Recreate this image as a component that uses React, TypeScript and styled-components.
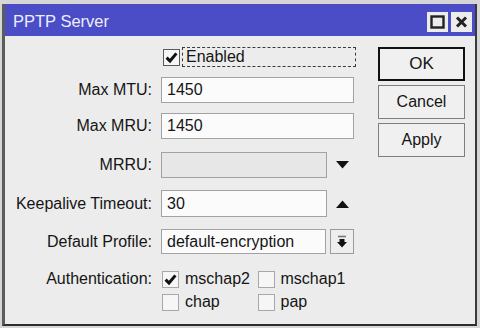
import React from "react";
import styled, { createGlobalStyle } from "styled-components";

const GlobalStyle = createGlobalStyle`
  html, body {
    margin: 0;
    padding: 0;
    background: #d6d6d6;
  }
  body {
    font-family: "Liberation Sans", Arial, sans-serif;
    font-size: 16px;
    color: #151515;
  }
`;

const Frame = styled.div`
  box-sizing: border-box;
  display: flex;
  height: 328px;
  padding: 4px 3px 2px 2px;
  width: 480px;
`;

const Window = styled.div`
  border-bottom: 2px solid #2e2e2e;
  border-left: 3px solid #5c5c5c;
  border-right: 2px solid #3a3a3a;
  display: flex;
  flex: 1;
  flex-direction: column;
`;

const TitleBar = styled.div`
  align-items: center;
  background-color: #4a4dc5;
  display: flex;
  height: 32px;
  justify-content: space-between;
  padding: 0 3px 0 8px;
`;

const Title = styled.span`
  color: #eeeefc;
  font-size: 16.5px;
  margin-top: 2px;
`;

const TitleButtons = styled.div`
  align-self: flex-end;
  display: flex;
  gap: 3px;
  margin-bottom: 4px;
`;

const TitleButton = styled.div`
  align-items: center;
  background-color: #ececec;
  display: flex;
  height: 20px;
  justify-content: center;
  width: 21px;
`;

const Client = styled.div`
  background-color: #ececec;
  display: flex;
  flex: 1;
  padding-top: 11px;
`;

const Form = styled.div`
  display: flex;
  flex-direction: column;
`;

const Row = styled.div<{ $h: number; $mt: number }>`
  align-items: center;
  column-gap: 9px;
  display: grid;
  grid-template-columns: 147px 193px;
  height: ${p => p.$h}px;
  margin-top: ${p => p.$mt}px;
`;

const Label = styled.span`
  text-align: right;
  white-space: nowrap;
`;

const Control = styled.div`
  align-items: center;
  display: flex;
  height: 100%;
`;

const Field = styled.div<{ $w?: number; $disabled?: boolean }>`
  align-items: center;
  background-color: ${p => (p.$disabled ? "#e7e7e7" : "#fbfbfb")};
  border: 1px solid #a2a2a2;
  box-sizing: border-box;
  display: flex;
  height: 100%;
  padding-left: 5px;
  width: ${p => (p.$w ? `${p.$w}px` : "100%")};
`;

const Box = styled.span<{ $ml?: number; $dark?: boolean }>`
  align-items: center;
  background-color: #f6f6f6;
  border: 1px solid ${p => (p.$dark ? "#5a5a5a" : "#a8a8a8")};
  box-sizing: border-box;
  display: inline-flex;
  flex-shrink: 0;
  height: 17px;
  justify-content: center;
  margin-left: ${p => p.$ml ?? 0}px;
  width: 17px;
`;

const FocusLabel = styled.span`
  align-items: center;
  border: 1px dashed #3a3a3a;
  box-sizing: border-box;
  display: flex;
  flex: 1;
  height: 20px;
  margin-left: 2px;
  margin-right: -2px;
  padding-left: 3px;
`;

const Spinner = styled.span`
  display: inline-flex;
  margin-left: 9px;
`;

const DropButton = styled.span`
  align-items: center;
  background-color: #eeeeee;
  border: 1px solid #9c9c9c;
  box-sizing: border-box;
  display: flex;
  height: 25px;
  justify-content: center;
  margin-left: 4px;
  width: 24px;
`;

const CheckItem = styled.label`
  align-items: center;
  display: flex;
  width: 101px;
`;

const CheckText = styled.span`
  margin-left: 6px;
`;

const Actions = styled.div`
  display: flex;
  flex-direction: column;
  gap: 4px;
  margin-left: 24px;
`;

const Button = styled.div<{ $primary?: boolean }>`
  align-items: center;
  background-color: #f0f0f0;
  border: ${p => (p.$primary ? "2px solid #111111" : "1px solid #7e7e7e")};
  box-sizing: border-box;
  display: flex;
  font-size: ${p => (p.$primary ? "17px" : "16px")};
  height: 34px;
  justify-content: center;
  width: 87px;
`;

const Check = () => (
  <svg width="13" height="13" viewBox="0 0 13 13">
    <path d="M1.6 6.6 L5 10 L11.4 2.4" fill="none" stroke="#111" strokeWidth="3" />
  </svg>
);

const Triangle = ({ up }: { up?: boolean }) => (
  <svg width="13" height="8" viewBox="0 0 13 8">
    <path d={up ? "M0 8 L6.5 0.5 L13 8 Z" : "M0 0 L6.5 7.5 L13 0 Z"} fill="#111" />
  </svg>
);

const App = () => (
  <>
    <GlobalStyle />
    <Frame>
      <Window>
        <TitleBar>
          <Title>PPTP Server</Title>
          <TitleButtons>
            <TitleButton>
              <svg width="15" height="14" viewBox="0 0 15 14">
                <rect x="1.5" y="1.5" width="12" height="11" fill="none" stroke="#222" strokeWidth="2.4" />
              </svg>
            </TitleButton>
            <TitleButton>
              <svg width="13" height="12" viewBox="0 0 13 12">
                <path d="M2 1.5 L11 10.5 M11 1.5 L2 10.5" stroke="#222" strokeWidth="3" />
              </svg>
            </TitleButton>
          </TitleButtons>
        </TitleBar>
        <Client>
          <Form>
            <Row $h={20} $mt={0}>
              <Label />
              <Control>
                <Box $ml={2} $dark>
                  <Check />
                </Box>
                <FocusLabel>Enabled</FocusLabel>
              </Control>
            </Row>
            <Row $h={26} $mt={10}>
              <Label>Max MTU:</Label>
              <Control>
                <Field>1450</Field>
              </Control>
            </Row>
            <Row $h={26} $mt={10}>
              <Label>Max MRU:</Label>
              <Control>
                <Field>1450</Field>
              </Control>
            </Row>
            <Row $h={26} $mt={13}>
              <Label>MRRU:</Label>
              <Control>
                <Field $w={166} $disabled />
                <Spinner>
                  <Triangle />
                </Spinner>
              </Control>
            </Row>
            <Row $h={27} $mt={12}>
              <Label>Keepalive Timeout:</Label>
              <Control>
                <Field $w={166}>30</Field>
                <Spinner>
                  <Triangle up />
                </Spinner>
              </Control>
            </Row>
            <Row $h={25} $mt={12}>
              <Label>Default Profile:</Label>
              <Control>
                <Field $w={165}>default-encryption</Field>
                <DropButton>
                  <svg width="12" height="14" viewBox="0 0 12 14">
                    <path d="M2 1.5 H10" stroke="#777" strokeWidth="1.6" />
                    <path d="M3.5 4 H8.5 V7 H11 L6 12.5 L1 7 H3.5 Z" fill="#111" />
                  </svg>
                </DropButton>
              </Control>
            </Row>
            <Row $h={17} $mt={16}>
              <Label>Authentication:</Label>
              <Control>
                <CheckItem>
                  <Box $ml={1}>
                    <Check />
                  </Box>
                  <CheckText>mschap2</CheckText>
                </CheckItem>
                <CheckItem>
                  <Box>{null}</Box>
                  <CheckText>mschap1</CheckText>
                </CheckItem>
              </Control>
            </Row>
            <Row $h={17} $mt={6}>
              <Label />
              <Control>
                <CheckItem>
                  <Box $ml={1}>{null}</Box>
                  <CheckText>chap</CheckText>
                </CheckItem>
                <CheckItem>
                  <Box>{null}</Box>
                  <CheckText>pap</CheckText>
                </CheckItem>
              </Control>
            </Row>
          </Form>
          <Actions>
            <Button $primary>OK</Button>
            <Button>Cancel</Button>
            <Button>Apply</Button>
          </Actions>
        </Client>
      </Window>
    </Frame>
  </>
);

export default App;
